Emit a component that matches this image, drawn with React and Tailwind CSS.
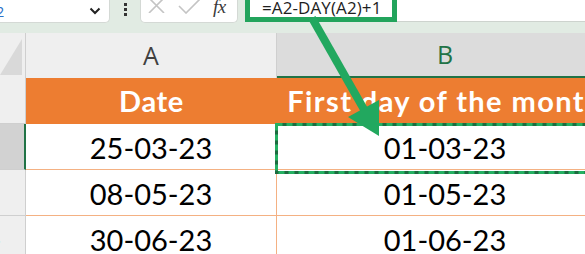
import React from 'react';

const rows = [
  { n: '2', date: '25-03-23', first: '01-03-23', active: true },
  { n: '3', date: '08-05-23', first: '01-05-23' },
  { n: '4', date: '30-06-23', first: '01-06-23' },
];

function Chevron() {
  return (
    <svg width="12" height="8" viewBox="0 0 12 8" className="mr-[8px]">
      <path d="M1.5 1.5 L6 6 L10.5 1.5" fill="none" stroke="#222" strokeWidth="2" />
    </svg>
  );
}

export default function App() {
  return (
    <div className="relative w-[585px] h-[254px] overflow-hidden bg-white" style={{ fontFamily: 'Lato, "Open Sans", sans-serif' }}>
      {/* formula toolbar */}
      <div className="flex h-[33px] items-start bg-[#e1ebe3]">
        <div className="w-[110px] h-[23px] shrink-0 bg-white rounded-br-[5px] border-r border-b border-[#d4d9d5] flex items-center justify-between overflow-hidden">
          <span className="-ml-[14px] text-[15px] text-[#2b72c9]" style={{ fontFamily: '"Open Sans", sans-serif' }}>B2</span>
          <Chevron />
        </div>
        <div className="w-[30px] h-[16px] shrink-0 flex flex-col items-center justify-center gap-[2px] pt-[2px]">
          <span className="w-[3px] h-[3px] bg-[#333]" />
          <span className="w-[3px] h-[3px] bg-[#333]" />
          <span className="w-[3px] h-[3px] bg-[#333]" />
        </div>
        <div className="w-[98px] h-[23px] shrink-0 bg-white rounded-b-[5px] border border-t-0 border-[#d4d9d5] flex items-start pl-[6px]">
          <svg width="20" height="16" viewBox="0 0 20 16" className="-mt-[3px]">
            <path d="M2 1 L17 16 M17 1 L2 16" stroke="#c4c4c4" strokeWidth="1.6" />
          </svg>
          <svg width="26" height="16" viewBox="0 0 26 16" className="ml-[10px] -mt-[2px]">
            <path d="M2 8 L9 15 L24 0" fill="none" stroke="#c4c4c4" strokeWidth="1.6" />
          </svg>
          <span className="ml-[10px] -mt-[3px] text-[19px] italic text-[#3a3a3a] leading-none tracking-[-0.5px]" style={{ fontFamily: '"Liberation Serif", serif' }}>
            fx
          </span>
        </div>
        <div className="ml-[7px] flex-1 h-[22px] bg-white border-b border-[#cdd3ce]">
          <div className="w-[152px] h-[25px] -mt-[3px] bg-white border-[5px] border-t-0 border-[#22a45c] flex items-center pl-[12px]">
            <span className="text-[17px] text-[#1e1e1e] leading-none tracking-[0.1px]" style={{ fontFamily: '"Open Sans", sans-serif' }}>
              =A2-DAY(A2)+1
            </span>
          </div>
        </div>
      </div>

      {/* column headers */}
      <div className="flex h-[45px]" style={{ fontFamily: '"Open Sans", sans-serif' }}>
        <div className="relative w-[26px] shrink-0 bg-[#efefef] border-r border-[#cfcfcf]">
          <svg width="22" height="36" viewBox="0 0 22 36" className="absolute right-[3px] bottom-[3px]">
            <polygon points="22,0 22,36 0,36" fill="#d9d9d9" />
          </svg>
        </div>
        <div className="w-[251px] shrink-0 bg-[#efefef] border-r border-[#cfcfcf] flex items-center justify-center text-[25px] text-[#404040]">
          A
        </div>
        <div className="w-[336px] shrink-0 bg-[#dcdcdc] border-b-[2px] border-[#217346] flex items-center justify-center text-[25px] text-[#217346]">
          B
        </div>
      </div>

      {/* table header row */}
      <div className="flex h-[46px]">
        <div className="w-[26px] shrink-0 bg-[#efefef] border-r border-b border-[#cfcfcf]" />
        <div className="w-[251px] shrink-0 bg-[#ed7d31] flex items-center justify-center text-[29px] font-bold text-white tracking-[0.6px]">
          Date
        </div>
        <div className="w-[336px] shrink-0 bg-[#ed7d31] flex items-center justify-center text-[29px] font-bold text-white whitespace-nowrap tracking-[1.4px]">
          First day of the month
        </div>
      </div>

      {/* data rows */}
      {rows.map((r) => (
        <div key={r.n} className="flex h-[46px]">
          <div
            className={
              r.active
                ? 'w-[26px] shrink-0 bg-[#d2d2d2] border-r-[2px] border-b border-r-[#217346] border-b-[#cfcfcf] flex items-center overflow-hidden'
                : 'w-[26px] shrink-0 bg-[#efefef] border-r border-b border-[#cfcfcf] flex items-center overflow-hidden'
            }
          >
            <span className="-ml-[12px] text-[21px] text-[#3a94d8]" style={{ fontFamily: '"Open Sans", sans-serif' }}>{r.n}</span>
          </div>
          <div className="w-[251px] shrink-0 border-r border-b border-[#f4b183] flex items-center justify-center pt-[3px] text-[29px] text-black">
            {r.date}
          </div>
          <div className="w-[336px] shrink-0 border-b border-[#f4b183] flex items-center justify-center pt-[3px] text-[29px] text-black">
            {r.first}
          </div>
        </div>
      ))}

      {/* copy selection marquee on B2 */}
      <svg className="absolute left-[275px] top-[123px]" width="330" height="51">
        <rect x="1.5" y="1.5" width="340" height="48" fill="none" stroke="#1d6b40" strokeWidth="3" />
        <rect x="1.5" y="1.5" width="340" height="48" fill="none" stroke="#25b062" strokeWidth="3" strokeDasharray="6 4" />
      </svg>

      {/* callout arrow */}
      <svg className="absolute inset-0 pointer-events-none" width="585" height="254">
        <line x1="312" y1="18" x2="366" y2="113" stroke="#22a85f" strokeWidth="8" />
        <polygon points="379,136 348,117 379,100" fill="#22a85f" />
      </svg>
    </div>
  );
}
